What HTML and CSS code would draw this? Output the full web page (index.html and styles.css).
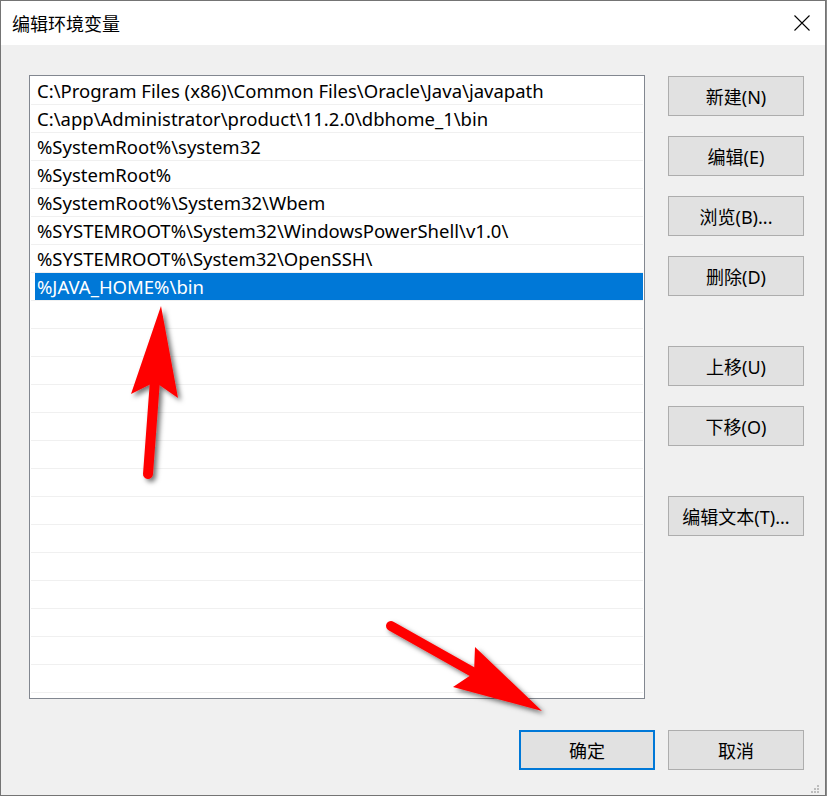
FILE: index.html
```html
<!DOCTYPE html>
<html lang="zh-CN">
<head>
<meta charset="utf-8">
<title>编辑环境变量</title>
<link rel="stylesheet" href="styles.css">
</head>
<body>
<div class="window">
  <div class="titlebar">
    <span class="title">编辑环境变量</span>
    <svg class="close" width="16" height="16" viewBox="0 0 16 16"><path d="M0.5 0.5L15.5 15.5M15.5 0.5L0.5 15.5" stroke="#000" stroke-width="1.1" fill="none"/></svg>
  </div>
  <div class="content">
    <div class="main">
      <div class="list">
        <div class="row"><span class="cell">C:\Program Files (x86)\Common Files\Oracle\Java\javapath</span></div>
        <div class="row"><span class="cell">C:\app\Administrator\product\11.2.0\dbhome_1\bin</span></div>
        <div class="row"><span class="cell">%SystemRoot%\system32</span></div>
        <div class="row"><span class="cell">%SystemRoot%</span></div>
        <div class="row"><span class="cell">%SystemRoot%\System32\Wbem</span></div>
        <div class="row"><span class="cell">%SYSTEMROOT%\System32\WindowsPowerShell\v1.0\</span></div>
        <div class="row"><span class="cell">%SYSTEMROOT%\System32\OpenSSH\</span></div>
        <div class="row sel"><span class="cell">%JAVA_HOME%\bin</span></div>
        <div class="row"><span class="cell"></span></div>
        <div class="row"><span class="cell"></span></div>
        <div class="row"><span class="cell"></span></div>
        <div class="row"><span class="cell"></span></div>
        <div class="row"><span class="cell"></span></div>
        <div class="row"><span class="cell"></span></div>
        <div class="row"><span class="cell"></span></div>
        <div class="row"><span class="cell"></span></div>
        <div class="row"><span class="cell"></span></div>
        <div class="row"><span class="cell"></span></div>
        <div class="row"><span class="cell"></span></div>
        <div class="row"><span class="cell"></span></div>
        <div class="row"><span class="cell"></span></div>
        <div class="row"><span class="cell"></span></div>
      </div>
      <div class="side">
        <div class="group">
          <button class="btn">新建(N)</button>
          <button class="btn">编辑(E)</button>
          <button class="btn">浏览(B)...</button>
          <button class="btn">删除(D)</button>
        </div>
        <div class="group">
          <button class="btn">上移(U)</button>
          <button class="btn">下移(O)</button>
        </div>
        <div class="group">
          <button class="btn">编辑文本(T)...</button>
        </div>
      </div>
    </div>
    <div class="footer">
      <button class="btn default">确定</button>
      <button class="btn">取消</button>
    </div>
  </div>
  <svg class="grip" width="8" height="8" viewBox="0 0 8 8">
    <rect x="6" y="0" width="2" height="2"/>
    <rect x="3" y="3" width="2" height="2"/><rect x="6" y="3" width="2" height="2"/>
    <rect x="0" y="6" width="2" height="2"/><rect x="3" y="6" width="2" height="2"/><rect x="6" y="6" width="2" height="2"/>
  </svg>
  <svg class="arrows" width="827" height="796" viewBox="0 0 827 796">
    <defs>
      <filter id="sh" x="-30%" y="-30%" width="170%" height="170%">
        <feDropShadow dx="3" dy="3" stdDeviation="2.5" flood-color="#000" flood-opacity="0.55"/>
      </filter>
    </defs>
    <g filter="url(#sh)" fill="#ff0000">
      <line x1="155" y1="380" x2="148" y2="474" stroke="#ff0000" stroke-width="10" stroke-linecap="round"/>
      <polygon points="161,306 178,398 155,382 131,394"/>
    </g>
    <g filter="url(#sh)" fill="#ff0000">
      <line x1="391" y1="626" x2="478" y2="675" stroke="#ff0000" stroke-width="10" stroke-linecap="round"/>
      <polygon points="542,711 453,687 474,673 475,647"/>
    </g>
  </svg>
</div>
</body>
</html>
```
FILE: styles.css
```css
html, body {
  margin: 0;
  padding: 0;
  background: #8a8a8a;
}

.window {
  position: relative;
  width: 824px;
  height: 794px;
  border: 1px solid #747474;
  background: #f0f0f0;
  display: flex;
  flex-direction: column;
  font-family: "Noto Sans", "Noto Sans CJK SC", sans-serif;
  color: #000;
}

.titlebar {
  height: 44px;
  background: #fff;
  display: flex;
  align-items: center;
  justify-content: space-between;
  padding: 0 15px 0 11px;
}

.title {
  font-family: "Noto Sans CJK SC", sans-serif;
  font-size: 18px;
  line-height: 20px;
}

.close {
  display: block;
}

.content {
  flex: 1;
  display: flex;
  flex-direction: column;
  padding: 30px 21px 25px 28px;
}

.main {
  display: flex;
  gap: 23px;
  height: 624px;
}

.list {
  box-sizing: border-box;
  width: 616px;
  height: 624px;
  border: 1px solid #828790;
  background: #fff;
  padding: 1px 1px 0 1px;
  overflow: hidden;
}

.row {
  height: 27px;
  border-bottom: 1px solid #f0f0f0;
  display: flex;
}

.cell {
  flex: 1;
  margin-left: 4px;
  padding-left: 2px;
  font-size: 18.5px;
  line-height: 27px;
  white-space: nowrap;
}

.sel .cell {
  background: #0078d7;
  color: #fff;
}

.side {
  display: flex;
  flex-direction: column;
  gap: 50px;
  padding-top: 1px;
}

.group {
  display: flex;
  flex-direction: column;
  gap: 20px;
}

.btn {
  box-sizing: border-box;
  width: 136px;
  height: 40px;
  border: 1px solid #adadad;
  background: #e1e1e1;
  padding: 0;
  margin: 0;
  font-family: "Noto Sans", "Noto Sans CJK SC", sans-serif;
  font-size: 18px;
  color: #000;
}

.btn.default {
  border: 2px solid #0078d7;
}

.footer {
  margin-top: 31px;
  display: flex;
  justify-content: flex-end;
  gap: 13px;
}

.grip {
  position: absolute;
  left: 810px;
  top: 784px;
  fill: #bdbdbd;
}

.arrows {
  position: absolute;
  left: -1px;
  top: -1px;
  pointer-events: none;
  overflow: visible;
}
```
